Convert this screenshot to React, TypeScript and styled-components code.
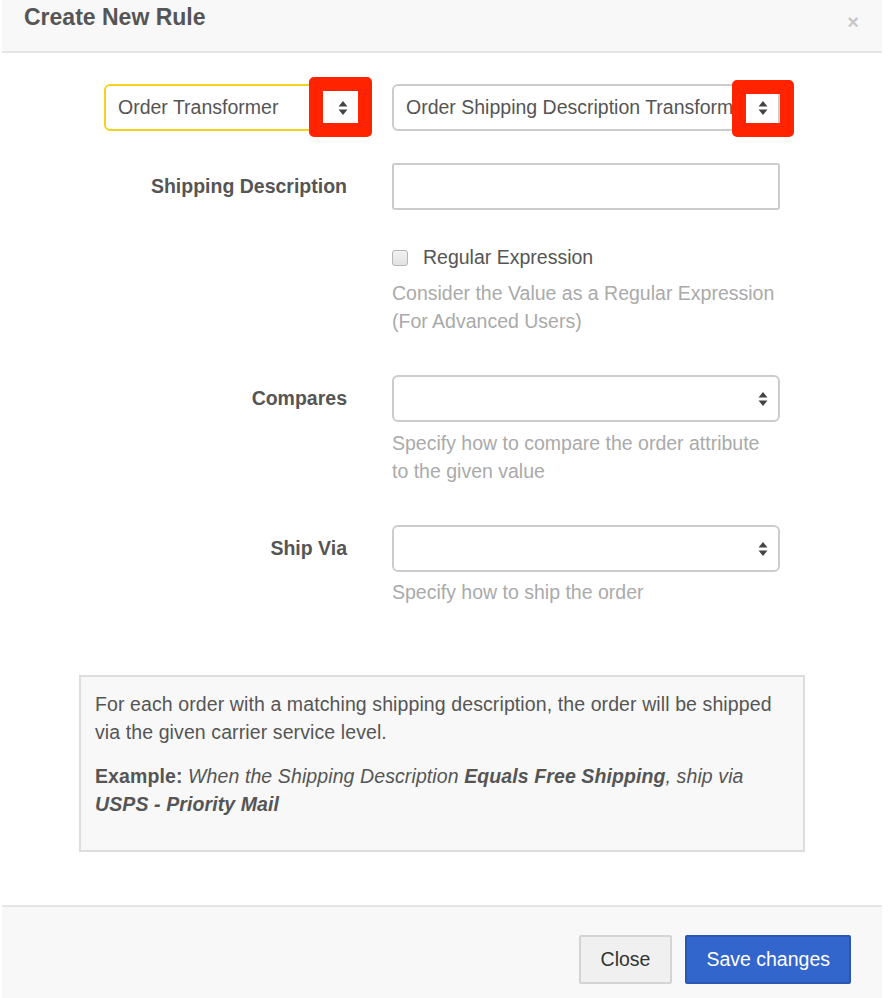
import React from "react";
import styled, { createGlobalStyle } from "styled-components";

const Global = createGlobalStyle`
  html, body { margin: 0; padding: 0; background: #ffffff; }
  * { box-sizing: border-box; }
`;

const Modal = styled.div`
  width: 880px;
  margin-left: 2px;
  font-family: "Liberation Sans", Arial, Helvetica, sans-serif;
  color: #555555;
  font-size: 19.5px;
`;

const Header = styled.div`
  height: 53px;
  background: #f8f8f8;
  border-bottom: 2px solid #e5e5e5;
  display: flex;
  justify-content: space-between;
  align-items: flex-start;
  padding: 0 23px 0 22px;
`;

const Title = styled.h4`
  margin: 4px 0 0;
  font-size: 23px;
  line-height: 26px;
  font-weight: 700;
  color: #555555;
`;

const CloseX = styled.span`
  margin-top: 11px;
  font-size: 20px;
  line-height: 22px;
  font-weight: 700;
  color: #c8c8c8;
`;

const Body = styled.div`
  padding-top: 31px;
`;

const SelectRow = styled.div`
  display: flex;
  gap: 32px;
  padding-left: 102px;
`;

const SelectWrap = styled.div<{ $w: number }>`
  position: relative;
  width: ${(p) => p.$w}px;
`;

const SelectBox = styled.div<{ $focus?: boolean }>`
  height: 47px;
  width: 100%;
  display: flex;
  align-items: center;
  gap: 18px;
  border: 2px solid ${(p) => (p.$focus ? "#f6d21f" : "#cccccc")};
  border-radius: 6px;
  background: #ffffff;
  padding: 0 10px 0 12px;
  color: #555555;
  font-size: 19.5px;
`;

const SelectText = styled.span`
  flex: 1;
  white-space: nowrap;
  overflow: hidden;
`;

const Highlight = styled.div<{ $l: number; $t: number; $w: number; $h: number }>`
  position: absolute;
  left: ${(p) => p.$l}px;
  top: ${(p) => p.$t}px;
  width: ${(p) => p.$w}px;
  height: ${(p) => p.$h}px;
  border: 14px solid #ff2300;
  border-radius: 5px;
`;

const FieldRow = styled.div<{ $mt: number }>`
  display: grid;
  grid-template-columns: 345px 388px;
  column-gap: 45px;
  margin-top: ${(p) => p.$mt}px;
`;

const Label = styled.label`
  text-align: right;
  font-weight: 700;
  font-size: 19.5px;
  line-height: 47px;
  color: #555555;
`;

const TextInput = styled.div`
  height: 47px;
  border: 2px solid #cccccc;
  border-radius: 3px;
  background: #ffffff;
`;

const CheckRow = styled.div`
  display: flex;
  align-items: center;
  gap: 15px;
  line-height: 28px;
  color: #555555;
`;

const Checkbox = styled.span`
  width: 16px;
  height: 16px;
  margin-top: 2px;
  border: 1px solid #b5b5b5;
  border-radius: 3px;
  background: linear-gradient(#f2f2f2, #e2e2e2);
`;

const Help = styled.div<{ $mt: number }>`
  margin-top: ${(p) => p.$mt}px;
  line-height: 28px;
  color: #aaaaaa;
`;

const InfoBox = styled.div`
  margin: 69px 0 0 77px;
  width: 726px;
  background: #f8f8f8;
  border: 2px solid #dddddd;
  padding: 13px 14px 16px;
  line-height: 28px;
  color: #555555;
  letter-spacing: 0.1px;
`;

const Para = styled.p`
  margin: 0 0 16px;
`;

const Footer = styled.div`
  margin-top: 53px;
  border-top: 2px solid #e5e5e5;
  background: #f8f8f8;
  display: flex;
  justify-content: flex-end;
  gap: 13px;
  padding: 28px 31px 20px;
`;

const Button = styled.button<{ $primary?: boolean }>`
  height: 49px;
  padding: 0 ${(p) => (p.$primary ? 19 : 20)}px;
  font-family: "Liberation Sans", Arial, sans-serif;
  font-size: 19.5px;
  border-radius: 2px;
  border: 2px solid ${(p) => (p.$primary ? "#2b56b2" : "#d4d4d4")};
  background: ${(p) => (p.$primary ? "#3366cc" : "#f0f0f0")};
  color: ${(p) => (p.$primary ? "#ffffff" : "#333333")};
`;

const Arrows = () => (
  <svg width="10" height="16" viewBox="0 0 10 16">
    <polygon points="5,1 9.5,6.5 0.5,6.5" fill="#444" />
    <polygon points="0.5,9.5 9.5,9.5 5,15" fill="#444" />
  </svg>
);

export default function App() {
  return (
    <>
      <Global />
      <Modal>
        <Header>
          <Title>Create New Rule</Title>
          <CloseX>×</CloseX>
        </Header>
        <Body>
          <SelectRow>
            <SelectWrap $w={256}>
              <SelectBox $focus>
                <SelectText>Order Transformer</SelectText>
                <Arrows />
              </SelectBox>
              <Highlight $l={205} $t={-7} $w={63} $h={60} />
            </SelectWrap>
            <SelectWrap $w={388}>
              <SelectBox>
                <SelectText>Order Shipping Description Transformer</SelectText>
                <Arrows />
              </SelectBox>
              <Highlight $l={340} $t={-4} $w={62} $h={57} />
            </SelectWrap>
          </SelectRow>

          <FieldRow $mt={32}>
            <Label>Shipping Description</Label>
            <TextInput />
          </FieldRow>

          <FieldRow $mt={33}>
            <span />
            <div>
              <CheckRow>
                <Checkbox />
                <span>Regular Expression</span>
              </CheckRow>
              <Help $mt={8}>
                Consider the Value as a Regular Expression
                <br />
                (For Advanced Users)
              </Help>
            </div>
          </FieldRow>

          <FieldRow $mt={40}>
            <Label>Compares</Label>
            <div>
              <SelectBox>
                <SelectText />
                <Arrows />
              </SelectBox>
              <Help $mt={7}>
                Specify how to compare the order attribute
                <br />
                to the given value
              </Help>
            </div>
          </FieldRow>

          <FieldRow $mt={40}>
            <Label>Ship Via</Label>
            <div>
              <SelectBox>
                <SelectText />
                <Arrows />
              </SelectBox>
              <Help $mt={6}>Specify how to ship the order</Help>
            </div>
          </FieldRow>

          <InfoBox>
            <Para>
              For each order with a matching shipping description, the order will be shipped
              <br />
              via the given carrier service level.
            </Para>
            <Para>
              <b>Example:</b>{" "}
              <i>
                When the Shipping Description <b>Equals Free Shipping</b>, ship via
                <br />
                <b>USPS - Priority Mail</b>
              </i>
            </Para>
          </InfoBox>
        </Body>
        <Footer>
          <Button>Close</Button>
          <Button $primary>Save changes</Button>
        </Footer>
      </Modal>
    </>
  );
}
